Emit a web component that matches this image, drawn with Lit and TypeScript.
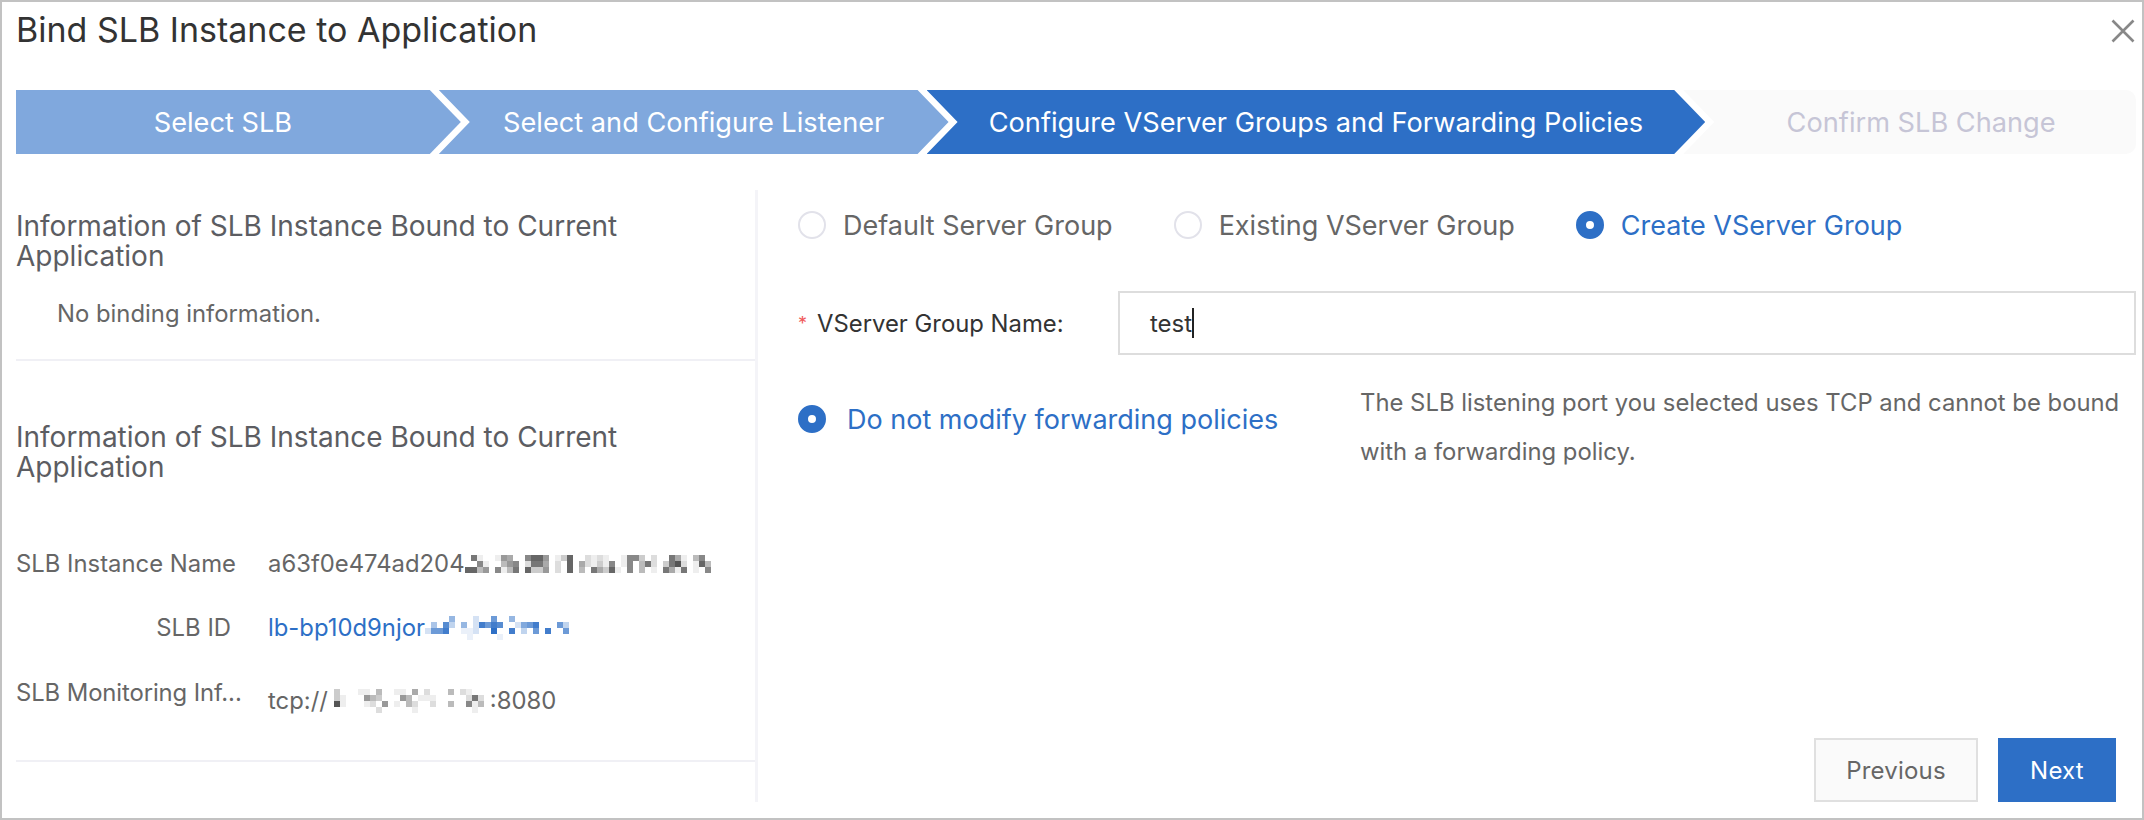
import { LitElement, html, css, svg } from "lit";
import { customElement, property } from "lit/decorators.js";

@customElement("px-mosaic")
class PxMosaic extends LitElement {
  @property({ type: Array }) rows: string[] = [];
  @property() base = "#555555";
  static styles = css`
    :host { display: inline-flex; flex: none; }
    svg { display: block; }
  `;
  render() {
    const w = (this.rows[0]?.length ?? 0) * 6;
    const h = this.rows.length * 6;
    return html`<svg width=${w} height=${h} viewBox="0 0 ${w} ${h}" shape-rendering="crispEdges">
      ${this.rows.map((r, y) =>
        [...r].map((c, x) => {
          const op = (15 - parseInt(c, 16)) / 10;
          return op <= 0 ? null : svg`<rect x=${x * 6} y=${y * 6} width="6" height="6" fill=${this.base} opacity=${op}></rect>`;
        })
      )}
    </svg>`;
  }
}

const M1 = [
  "f7effe9aff8669fec6ffdedeffe88cfdff7aefb8f",
  "ff8effb98fd77afdf6fadece8fe8fb7dfc75dfe6b",
  "66b9f8eb7f6cc9fdf6fbf7ac6ef8fbfef7ae7fef8",
];
const M2 = [
  "ffffafffdff8ffafffffffff",
  "fbf7cfafd6867ffd986fff8c",
  "d886ffeedff5ff6fcf8f6ff8",
  "fffffffeffffefffffffffff",
];
const M3 = [
  "fcfffeefbffeefafdfffbfdefff",
  "fcefff9bcfff9bfeeefffffd7df",
  "f5efffedf9fefbdffdffbff8ebf",
  "ffffffffdfffffefffffffffeff",
];

@customElement("app-root")
class AppRoot extends LitElement {
  static styles = css`
    :host {
      display: block;
      font-family: Inter, "Liberation Sans", sans-serif;
      color: #666;
    }
    .frame {
      box-sizing: border-box;
      width: 2144px;
      height: 820px;
      border: 2px solid #c2c2c2;
      padding: 7px 6px 16px 14px;
      background: #fff;
      display: flex;
      flex-direction: column;
    }
    .head {
      display: flex;
      justify-content: space-between;
      align-items: center;
      height: 44px;
      margin-bottom: 37px;
      padding-right: 1px;
    }
    .title {
      font-size: 34px;
      color: #333;
      padding-bottom: 4px;
    }
    .close { display: block; }
    .steps { display: flex; height: 64px; margin-bottom: 36px; }
    .step {
      box-sizing: border-box;
      display: flex;
      align-items: center;
      justify-content: center;
      padding: 0 31px;
      margin-left: -22px;
      font-size: 27.2px;
      color: #fff;
      background: #80a8dd;
      clip-path: polygon(0 0, calc(100% - 31px) 0, 100% 50%, calc(100% - 31px) 100%, 0 100%, 31px 50%);
    }
    .step.s1 { width: 445px; margin-left: 0; padding-left: 0; clip-path: polygon(0 0, calc(100% - 31px) 0, 100% 50%, calc(100% - 31px) 100%, 0 100%); }
    .step.s2 { width: 510px; }
    .step.s3 { width: 779px; background: #2d6fc6; }
    .step.s4 {
      width: 453px;
      padding-right: 8px;
      background: #fafafa;
      color: #c6c5d6;
      border-radius: 0 10px 10px 0;
      clip-path: polygon(0 0, 100% 0, 100% 100%, 0 100%, 31px 50%);
    }
    .body { flex: 1; display: flex; min-height: 0; }
    .left {
      box-sizing: border-box;
      width: 742px;
      flex: none;
      border-right: 3px solid #f4f4f8;
      padding-top: 21px;
      display: flex;
      flex-direction: column;
    }
    h3 {
      margin: 0;
      font-size: 28px;
      line-height: 30px;
      font-weight: 400;
      color: #5c5d62;
      padding-right: 60px;
    }
    .none {
      font-size: 23.85px;
      line-height: 30px;
      padding: 28px 0 30px 41px;
      border-bottom: 2px solid #f0f0f5;
      margin-bottom: 61px;
    }
    .info {
      display: flex;
      flex-direction: column;
      margin-top: 50px;
      padding-bottom: 18px;
      border-bottom: 2px solid #f0f0f5;
      font-size: 23.85px;
      line-height: 30px;
    }
    .row { display: flex; height: 64px; align-items: center; }
    .row .k { box-sizing: border-box; width: 252px; flex: none; white-space: nowrap; }
    .row .k.r { text-align: right; padding-right: 37px; }
    .row .v { display: inline-flex; align-items: center; white-space: nowrap; }
    .row .v.link { color: #2d6fc6; }
    .row.mon { height: 82px; }
    .row.mon .k { align-self: flex-start; padding-top: 18px; letter-spacing: -0.1px; }
    .row.mon .v { align-self: flex-start; padding-top: 26px; }
    .right {
      flex: 1;
      display: flex;
      flex-direction: column;
      padding: 21px 0 0 40px;
      min-width: 0;
    }
    .radios { display: flex; gap: 61px; height: 28px; align-items: center; margin-bottom: 52px; }
    .radio { display: flex; align-items: center; gap: 17px; font-size: 27px; white-space: nowrap; }
    .radio.on { color: #2d6fc6; }
    .dot {
      box-sizing: border-box;
      width: 28px;
      height: 28px;
      flex: none;
      border-radius: 50%;
      border: 2px solid #e2e2ea;
      background: #fff;
    }
    .on .dot { border: 10px solid #2d6fc6; }
    .field { display: flex; align-items: center; height: 64px; margin-bottom: 34px; }
    .field label { width: 320px; flex: none; font-size: 23.85px; color: #333; display: flex; gap: 10px; align-items: center; }
    .star { color: #f05a5a; font-size: 18px; width: 9px; }
    .input {
      box-sizing: border-box;
      flex: 1;
      height: 64px;
      border: 2px solid #ddd;
      padding: 0 0 0 30px;
      display: flex;
      align-items: center;
      font-size: 24px;
      color: #333;
    }
    .caret { width: 2px; height: 30px; background: #222; }
    .policy { display: flex; align-items: flex-start; }
    .policy .radio { width: 562px; flex: none; gap: 21px; height: 28px; margin-top: 16px; }
    .desc { font-size: 23.85px; line-height: 49px; color: #666; width: 780px; margin-top: -11px; }
    .foot { margin-top: auto; display: flex; justify-content: flex-end; gap: 20px; padding-right: 20px; }
    .btn {
      box-sizing: border-box;
      height: 64px;
      display: flex;
      align-items: center;
      justify-content: center;
      font-size: 24px;
      letter-spacing: 0.2px;
    }
    .btn.prev { width: 164px; border: 2px solid #e0e0e0; background: #fafafa; color: #666; }
    .btn.next { width: 118px; background: #2d6fc6; color: #fff; }
  `;

  render() {
    return html`<div class="frame">
      <div class="head">
        <div class="title">Bind SLB Instance to Application</div>
        <svg class="close" width="24" height="24" viewBox="0 0 24 24" fill="none" stroke="#888" stroke-width="2.6">
          <path d="M1.5 1.5 L22.5 22.5 M22.5 1.5 L1.5 22.5"></path>
        </svg>
      </div>
      <div class="steps">
        <div class="step s1">Select SLB</div>
        <div class="step s2">Select and Configure Listener</div>
        <div class="step s3">Configure VServer Groups and Forwarding Policies</div>
        <div class="step s4">Confirm SLB Change</div>
      </div>
      <div class="body">
        <div class="left">
          <h3>Information of SLB Instance Bound to Current Application</h3>
          <div class="none">No binding information.</div>
          <h3>Information of SLB Instance Bound to Current Application</h3>
          <div class="info">
            <div class="row">
              <div class="k">SLB Instance Name</div>
              <div class="v">a63f0e474ad204<px-mosaic .rows=${M1}></px-mosaic></div>
            </div>
            <div class="row">
              <div class="k r">SLB ID</div>
              <div class="v link">lb-bp10d9njor<px-mosaic .rows=${M2} base="#2d6fc6"></px-mosaic></div>
            </div>
            <div class="row mon">
              <div class="k">SLB Monitoring Inf...</div>
              <div class="v">tcp://<px-mosaic .rows=${M3}></px-mosaic>:8080</div>
            </div>
          </div>
        </div>
        <div class="right">
          <div class="radios">
            <div class="radio"><span class="dot"></span>Default Server Group</div>
            <div class="radio"><span class="dot"></span>Existing VServer Group</div>
            <div class="radio on"><span class="dot"></span>Create VServer Group</div>
          </div>
          <div class="field">
            <label><span class="star">*</span>VServer Group Name:</label>
            <div class="input">test<span class="caret"></span></div>
          </div>
          <div class="policy">
            <div class="radio on"><span class="dot"></span>Do not modify forwarding policies</div>
            <div class="desc">The SLB listening port you selected uses TCP and cannot be bound with a forwarding policy.</div>
          </div>
          <div class="foot">
            <div class="btn prev">Previous</div>
            <div class="btn next">Next</div>
          </div>
        </div>
      </div>
    </div>`;
  }
}
